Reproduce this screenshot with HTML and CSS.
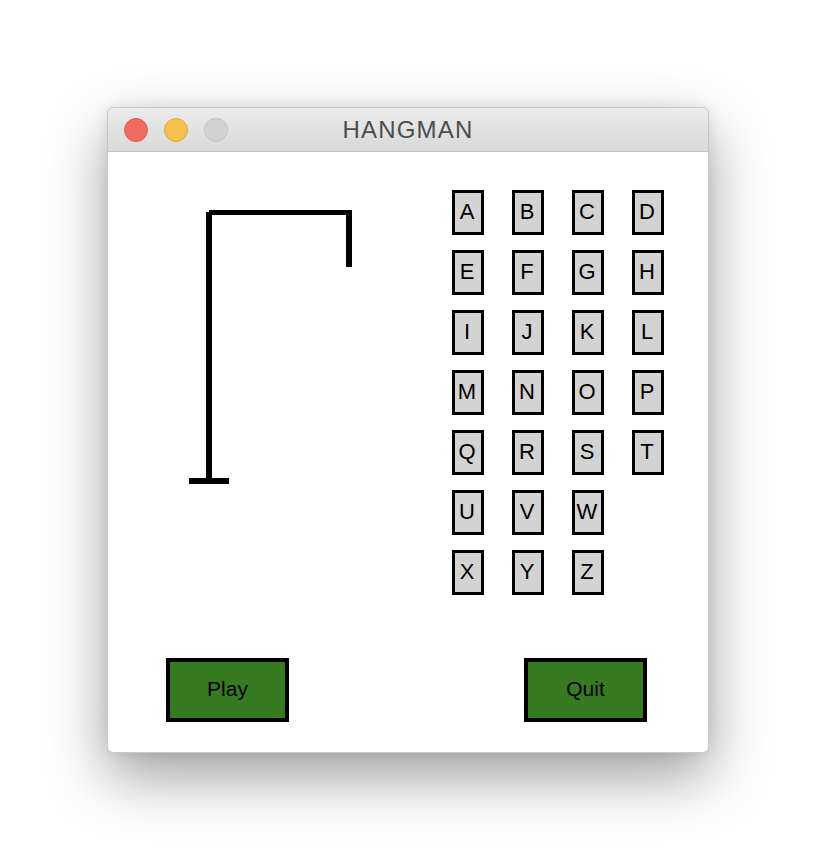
FILE: index.html
```html
<!DOCTYPE html>
<html>
<head>
<meta charset="utf-8">
<title>HANGMAN</title>
<link rel="stylesheet" href="styles.css">
</head>
<body>
<div class="window">
  <div class="titlebar">
    <div class="lights">
      <span class="light red"></span>
      <span class="light yellow"></span>
      <span class="light grey"></span>
    </div>
    <div class="title">HANGMAN</div>
  </div>
  <div class="content">
    <div class="top">
      <svg class="gallows" width="344" height="460" viewBox="0 0 344 460">
        <rect x="98" y="60" width="6" height="272" fill="#000"/>
        <rect x="101" y="58" width="143" height="5" fill="#000"/>
        <rect x="238" y="61" width="6" height="54" fill="#000"/>
        <rect x="81" y="326" width="40" height="6" fill="#000"/>
      </svg>
      <div class="letters">
        <div class="key">A</div><div class="key">B</div><div class="key">C</div><div class="key">D</div>
        <div class="key">E</div><div class="key">F</div><div class="key">G</div><div class="key">H</div>
        <div class="key">I</div><div class="key">J</div><div class="key">K</div><div class="key">L</div>
        <div class="key">M</div><div class="key">N</div><div class="key">O</div><div class="key">P</div>
        <div class="key">Q</div><div class="key">R</div><div class="key">S</div><div class="key">T</div>
        <div class="key">U</div><div class="key">V</div><div class="key">W</div>
        <div class="key newrow">X</div><div class="key">Y</div><div class="key">Z</div>
      </div>
    </div>
    <div class="actions">
      <div class="btn">Play</div>
      <div class="btn">Quit</div>
    </div>
  </div>
</div>
</body>
</html>
```

FILE: styles.css
```css
html, body {
  margin: 0;
  padding: 0;
  background: #ffffff;
}
body {
  box-sizing: border-box;
  min-height: 868px;
  padding: 107px 0 0 107px;
  font-family: "Liberation Sans", Arial, sans-serif;
}
.window {
  width: 600px;
  height: 644px;
  border: 1px solid rgba(0,0,0,0.22);
  border-radius: 6px;
  overflow: hidden;
  background: #fff;
  box-shadow: 0 24px 60px rgba(0,0,0,0.38), 0 0 14px rgba(0,0,0,0.08);
  display: flex;
  flex-direction: column;
}
.titlebar {
  height: 43px;
  border-bottom: 1px solid #c4c4c4;
  background: linear-gradient(#ebebeb, #d9d9d9);
  display: flex;
  align-items: center;
  position: relative;
}
.lights {
  display: flex;
  gap: 16px;
  padding-left: 16px;
}
.light {
  width: 22px;
  height: 22px;
  border-radius: 50%;
  display: block;
  margin-top: 1px;
}
.red { background: #ef6b5f; border: 1px solid #de5a4d; }
.yellow { background: #f6c04f; border: 1px solid #dfa83b; }
.grey { background: #d2d2d2; border: 1px solid #c2c2c2; }
.title {
  position: absolute;
  left: 0;
  right: 0;
  top: 0;
  bottom: 0;
  display: flex;
  align-items: center;
  justify-content: center;
  font-size: 24px;
  letter-spacing: 1.2px;
  color: #4d4d4d;
  padding-top: 1px;
  pointer-events: none;
}
.content {
  flex: 1;
  display: flex;
  flex-direction: column;
}
.top {
  display: flex;
  height: 506px;
}
.gallows {
  display: block;
  flex: none;
}
.letters {
  padding-top: 38px;
  display: grid;
  grid-template-columns: repeat(4, 32px);
  grid-auto-rows: 45px;
  column-gap: 28px;
  row-gap: 15px;
  align-content: start;
}
.key {
  box-sizing: border-box;
  border: 3px solid #000;
  background: #d3d3d3;
  display: flex;
  align-items: center;
  justify-content: center;
  font-size: 22px;
  color: #000;
  padding-bottom: 2px;
  padding-right: 2px;
}
.newrow { grid-column: 1; }
.actions {
  display: flex;
  justify-content: space-between;
  padding: 0 61px 0 58px;
}
.btn {
  box-sizing: border-box;
  width: 123px;
  height: 64px;
  border: 4px solid #000;
  background: #367a22;
  display: flex;
  align-items: center;
  justify-content: center;
  font-size: 21px;
  color: #000;
  padding-bottom: 2px;
}
```
